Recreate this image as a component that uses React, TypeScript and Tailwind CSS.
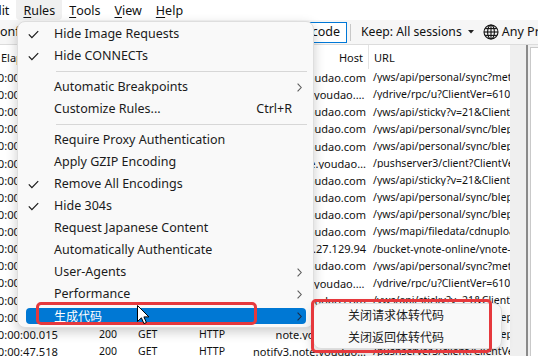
import React from "react";

type Item = {
  label?: string;
  check?: boolean;
  sub?: boolean;
  shortcut?: string;
  sep?: boolean;
  active?: boolean;
};

const items: Item[] = [
  { label: "Hide Image Requests", check: true },
  { label: "Hide CONNECTs", check: true },
  { sep: true },
  { label: "Automatic Breakpoints", sub: true },
  { label: "Customize Rules...", shortcut: "Ctrl+R" },
  { sep: true },
  { label: "Require Proxy Authentication" },
  { label: "Apply GZIP Encoding" },
  { label: "Remove All Encodings", check: true },
  { label: "Hide 304s", check: true },
  { label: "Request Japanese Content" },
  { label: "Automatically Authenticate" },
  { label: "User-Agents", sub: true },
  { label: "Performance", sub: true },
  { label: "生成代码", sub: true, active: true },
];

const rows = [
  { t: "00:00:00.128", m: "POST", host: "note.youdao.com", url: "/yws/api/personal/sync?method=push&keyfrom=pc" },
  { t: "00:00:00.093", m: "POST", host: "ydrive.note.youdao.com", url: "/ydrive/rpc/u?ClientVer=61000010000" },
  { t: "00:00:00.067", m: "GET", host: "note.youdao.com", url: "/yws/api/sticky?v=21&ClientVer=6100" },
  { t: "00:00:00.051", m: "GET", host: "note.youdao.com", url: "/yws/api/personal/sync/blepage" },
  { t: "00:00:00.048", m: "GET", host: "note.youdao.com", url: "/yws/api/personal/sync/blepage" },
  { t: "00:00:30.002", m: "GET", host: "notify3.note.youdao.com", url: "/pushserver3/client?ClientVer=6100" },
  { t: "00:00:00.071", m: "GET", host: "note.youdao.com", url: "/yws/api/sticky?v=21&ClientVer=6100" },
  { t: "00:00:00.046", m: "GET", host: "note.youdao.com", url: "/yws/api/personal/sync/blepage" },
  { t: "00:00:00.044", m: "GET", host: "note.youdao.com", url: "/yws/api/personal/sync/blepage" },
  { t: "00:00:00.212", m: "POST", host: "note.youdao.com", url: "/yws/mapi/filedata/cdnupload" },
  { t: "00:00:00.187", m: "PUT", host: "111.27.129.94", url: "/bucket-ynote-online/ynote-file" },
  { t: "00:00:00.133", m: "POST", host: "note.youdao.com", url: "/yws/api/personal/sync?method=push" },
  { t: "00:00:00.090", m: "POST", host: "ydrive.note.youdao.com", url: "/ydrive/rpc/u?ClientVer=61000010000" },
  { t: "00:00:00.062", m: "GET", host: "note.youdao.com", url: "/yws/api/sticky?v=21&ClientVer=6100" },
  { t: "00:00:00.017", m: "GET", host: "note.youdao.com", url: "/yws/api/personal/sync/blepage" },
  { t: "00:00:00.015", m: "GET", host: "note.youdao.com", url: "/yws/api/personal/sync/blepage" },
  { t: "00:00:47.518", m: "GET", host: "notify3.note.youdao.com", url: "/pushserver3/client?ClientVer=6100" },
];

const Check = () => (
  <svg width="11" height="9" viewBox="0 0 11 9">
    <path d="M0.8 4.4 L3.9 7.6 L10.2 1.1" fill="none" stroke="#1b1b1b" strokeWidth="1.25" />
  </svg>
);

const Chevron = ({ color = "#5c5c5c" }: { color?: string }) => (
  <svg width="5" height="9" viewBox="0 0 5 9">
    <path d="M0.6 0.6 L4.2 4.5 L0.6 8.4" fill="none" stroke={color} strokeWidth="1.1" />
  </svg>
);

const Caret = () => (
  <svg width="6" height="4" viewBox="0 0 6 4">
    <path d="M0 0 L6 0 L3 3.5 Z" fill="#222" />
  </svg>
);

const Globe = () => (
  <svg width="16" height="16" viewBox="0 0 16 16">
    <g fill="none" stroke="#111" strokeWidth="1.1">
      <circle cx="8" cy="8" r="7" />
      <line x1="8" y1="1" x2="8" y2="15" />
      <line x1="1" y1="8" x2="15" y2="8" />
      <ellipse cx="8" cy="8" rx="3.4" ry="7" />
      <line x1="2.2" y1="4.6" x2="13.8" y2="4.6" />
      <line x1="2.2" y1="11.4" x2="13.8" y2="11.4" />
    </g>
  </svg>
);

const Cursor = () => (
  <svg width="13" height="20" viewBox="0 0 13 20">
    <path
      d="M0.5 0.5 L0.5 16.5 L4.4 12.8 L6.9 18.6 L9.4 17.5 L6.9 11.9 L11.9 11.9 Z"
      fill="#fff"
      stroke="#000"
      strokeWidth="1"
      strokeLinejoin="round"
    />
  </svg>
);

const U = ({ c }: { c: string }) => <span className="underline underline-offset-2">{c}</span>;

export default function App() {
  return (
    <div
      className="relative w-[538px] h-[356px] overflow-hidden bg-white text-[#111] flex flex-col"
      style={{ fontFamily: '"Noto Sans", "Noto Sans CJK SC", sans-serif' }}
    >
      {/* Menu bar */}
      <div className="h-[20px] flex items-stretch text-[12.5px] leading-none bg-white shrink-0">
        <div className="-ml-[20px] px-[7px] flex items-center pt-[2px]">Edit</div>
        <div className="px-[7px] flex items-center pt-[2px] bg-[#f0f0f0] rounded-b-[4px]">
          <U c="R" />ules
        </div>
        <div className="px-[7px] flex items-center pt-[2px]">
          <U c="T" />ools
        </div>
        <div className="px-[7px] flex items-center pt-[2px]">
          <U c="V" />iew
        </div>
        <div className="px-[7px] flex items-center pt-[2px]">
          <U c="H" />elp
        </div>
      </div>

      {/* Toolbar */}
      <div className="h-[25px] shrink-0 flex items-center bg-[#f6f6f6] border-b border-[#dcdcdc] text-[12.5px] leading-none whitespace-nowrap">
        <div className="w-[290px] shrink-0">onf</div>
        <div className="w-[57px] h-[21px] shrink-0 border border-[#0078d7] flex items-center justify-end pr-[6px] bg-white">
          Decode
        </div>
        <div className="ml-[3px] w-px h-[17px] bg-[#c8c8c8] shrink-0" />
        <div className="ml-[10px] shrink-0 text-[12.2px]">Keep: All sessions</div>
        <div className="ml-[6px] shrink-0 flex items-center">
          <Caret />
        </div>
        <div className="ml-[9px] shrink-0 flex items-center">
          <Globe />
        </div>
        <div className="ml-[3px] shrink-0">Any Process</div>
      </div>

      {/* Table area */}
      <div className="flex-1 flex min-h-0">
        <div className="w-[510px] shrink-0 flex flex-col bg-white text-[10.5px] leading-none whitespace-nowrap">
          {/* header */}
          <div className="h-[24px] shrink-0 flex items-center text-[11px]">
            <div className="w-[62px] shrink-0 pl-[1px]">Elapsed</div>
            <div className="w-[68px] shrink-0 pl-[37px]">Result</div>
            <div className="w-[60px] shrink-0 pl-[8px]">Method</div>
            <div className="w-[60px] shrink-0 pl-[9px]">Protocol</div>
            <div className="w-[119px] shrink-0 h-full flex items-center justify-end pr-[5px] border-r border-[#e3e3e3]">
              Host
            </div>
            <div className="pl-[5px]">URL</div>
          </div>
          {rows.map((r, i) => (
            <div key={i} className="h-[17.125px] shrink-0 flex items-center">
              <div className="w-[62px] shrink-0 flex justify-end pr-[4px] text-[11.2px]">
                <span className="shrink-0">{r.t}</span>
              </div>
              <div className="w-[68px] shrink-0 pl-[37px]">200</div>
              <div className="w-[60px] shrink-0 pl-[8px]">{r.m}</div>
              <div className="w-[60px] shrink-0 pl-[9px]">HTTP</div>
              <div className="w-[119px] shrink-0 pl-[3px] pr-[3px] text-right overflow-hidden text-ellipsis text-[11px]">
                {r.host}
              </div>
              <div className="flex-1 pl-[4px] overflow-hidden">{r.url}</div>
            </div>
          ))}
        </div>
        <div className="w-[16px] shrink-0 bg-[#efefef]" />
        <div className="w-[2px] shrink-0 bg-[#8a8a8a]" />
        <div className="flex-1 bg-[#f0f0f0] pt-[2px] pl-[2px]">
          <div className="h-full bg-white border-l border-t border-[#c9c9c9]" />
        </div>
      </div>

      {/* Rules dropdown */}
      <div className="absolute left-[17px] top-[21px] w-[297px] pt-[1px] bg-[#f9f9f9] border border-[#dedede] rounded-[8px] shadow-[0_4px_12px_rgba(0,0,0,0.2)] text-[12.5px] leading-none text-[#1b1b1b]">
        {items.map((it, i) =>
          it.sep ? (
            <div key={i} className="h-[9px] pt-[4px]">
              <div className="ml-[38px] w-[251px] h-px bg-[#d7d7d7]" />
            </div>
          ) : (
            <div key={i} className="relative h-[22px] flex items-center">
              {it.active && (
                <div className="absolute left-[8px] top-[3px] w-[280px] h-[16px] rounded-[4px] bg-[#0078d4]" />
              )}
              {it.check && (
                <div className="absolute left-[10px] top-[7px]">
                  <Check />
                </div>
              )}
              <div
                className={`relative pl-[36px] ${it.active ? "text-white text-[12px]" : ""}`}
                style={it.active ? { fontFamily: '"Noto Sans CJK SC", sans-serif' } : undefined}
              >
                {it.label}
              </div>
              {it.shortcut && <div className="absolute right-[21px] top-[5px]">{it.shortcut}</div>}
              {it.sub && (
                <div className="absolute left-[279px] top-[7px]">
                  <Chevron color={it.active ? "#1b2b45" : "#5c5c5c"} />
                </div>
              )}
            </div>
          )
        )}
      </div>

      {/* Submenu */}
      <div
        className="absolute left-[313px] top-[303px] w-[189px] bg-[#f9f9f9] border border-[#dedede] rounded-[8px] shadow-[0_4px_12px_rgba(0,0,0,0.2)] text-[12px] leading-none text-[#1b1b1b]"
        style={{ fontFamily: '"Noto Sans CJK SC", sans-serif' }}
      >
        <div className="h-[22px] flex items-center pl-[34px]">关闭请求体转代码</div>
        <div className="h-[22px] flex items-center pl-[34px]">关闭返回体转代码</div>
      </div>

      {/* Red annotation boxes */}
      <div className="absolute left-[36px] top-[302px] w-[221px] h-[23px] border-[3px] border-[#e6393d] rounded-[5px]" />
      <div className="absolute left-[311px] top-[299px] w-[181px] h-[54px] border-[3px] border-[#e6393d] rounded-[5px]" />

      {/* Mouse cursor */}
      <div className="absolute left-[137px] top-[305px]">
        <Cursor />
      </div>
    </div>
  );
}
